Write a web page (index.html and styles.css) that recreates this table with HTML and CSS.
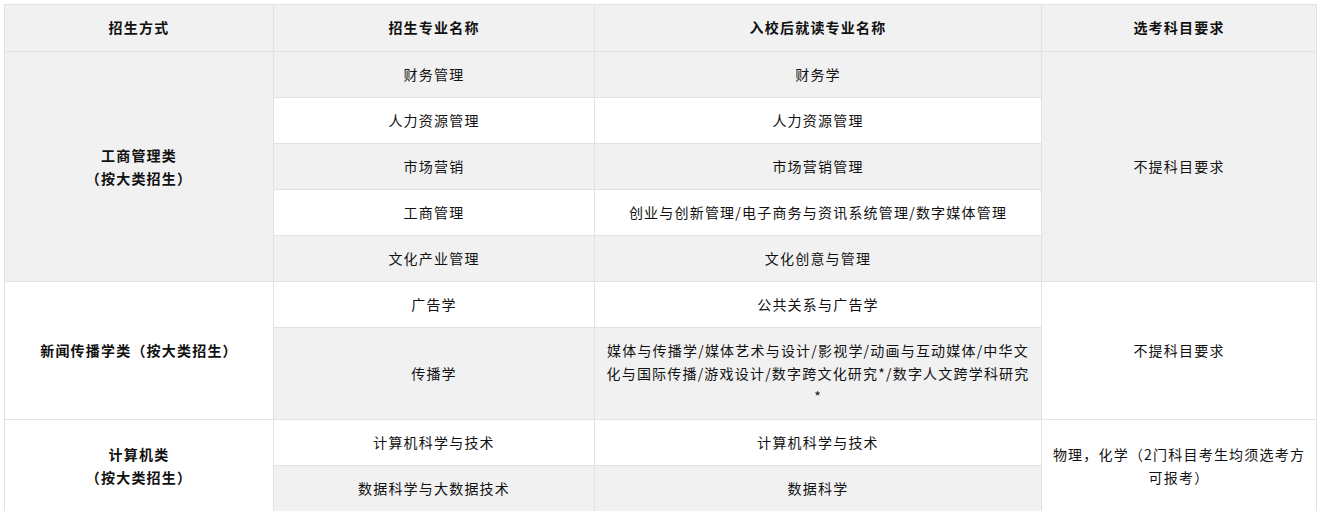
FILE: index.html
```html
<!DOCTYPE html>
<html lang="zh-CN">
<head>
<meta charset="utf-8">
<title>招生专业</title>
<link rel="stylesheet" href="styles.css">
</head>
<body>
<table class="plan">
  <colgroup>
    <col class="c1">
    <col class="c2">
    <col class="c3">
    <col class="c4">
  </colgroup>
  <thead>
    <tr>
      <th>招生方式</th>
      <th>招生专业名称</th>
      <th>入校后就读专业名称</th>
      <th>选考科目要求</th>
    </tr>
  </thead>
  <tbody>
    <tr class="odd">
      <td rowspan="5" class="cat">工商管理类<br>（按大类招生）</td>
      <td>财务管理</td>
      <td>财务学</td>
      <td rowspan="5">不提科目要求</td>
    </tr>
    <tr>
      <td>人力资源管理</td>
      <td>人力资源管理</td>
    </tr>
    <tr class="odd">
      <td>市场营销</td>
      <td>市场营销管理</td>
    </tr>
    <tr>
      <td>工商管理</td>
      <td>创业与创新管理/电子商务与资讯系统管理/数字媒体管理</td>
    </tr>
    <tr class="odd">
      <td>文化产业管理</td>
      <td>文化创意与管理</td>
    </tr>
    <tr>
      <td rowspan="2" class="cat">新闻传播学类（按大类招生）</td>
      <td>广告学</td>
      <td>公共关系与广告学</td>
      <td rowspan="2">不提科目要求</td>
    </tr>
    <tr class="odd">
      <td>传播学</td>
      <td>媒体与传播学/媒体艺术与设计/影视学/动画与互动媒体/中华文<br>化与国际传播/游戏设计/数字跨文化研究*/数字人文跨学科研究<br>*</td>
    </tr>
    <tr>
      <td rowspan="2" class="cat">计算机类<br>（按大类招生）</td>
      <td>计算机科学与技术</td>
      <td>计算机科学与技术</td>
      <td rowspan="2">物理，化学（2门科目考生均须选考方<br>可报考）</td>
    </tr>
    <tr class="odd">
      <td>数据科学与大数据技术</td>
      <td>数据科学</td>
    </tr>
  </tbody>
</table>
</body>
</html>
```
FILE: styles.css
```css
html, body {
  margin: 0;
  padding: 0;
  background: #ffffff;
}

body {
  padding: 4px;
  font-family: "Noto Sans CJK SC", "Noto Sans", sans-serif;
  font-size: 14px;
  color: #111111;
}

.plan {
  border-collapse: collapse;
  table-layout: fixed;
  width: 1313px;
}

.c1 { width: 269px; }
.c2 { width: 321px; }
.c3 { width: 447px; }
.c4 { width: 275px; }

.plan th,
.plan td {
  border: 1px solid #e2e2e2;
  padding: 11px 8px;
  line-height: 23px;
  text-align: center;
  vertical-align: middle;
  letter-spacing: 1.2px;
  white-space: nowrap;
}

.plan th {
  background: #f1f1f1;
  font-weight: bold;
  padding-bottom: 12px;
}

.plan tr.odd td {
  background: #f1f1f1;
}

.plan td.cat {
  font-weight: bold;
}
```
